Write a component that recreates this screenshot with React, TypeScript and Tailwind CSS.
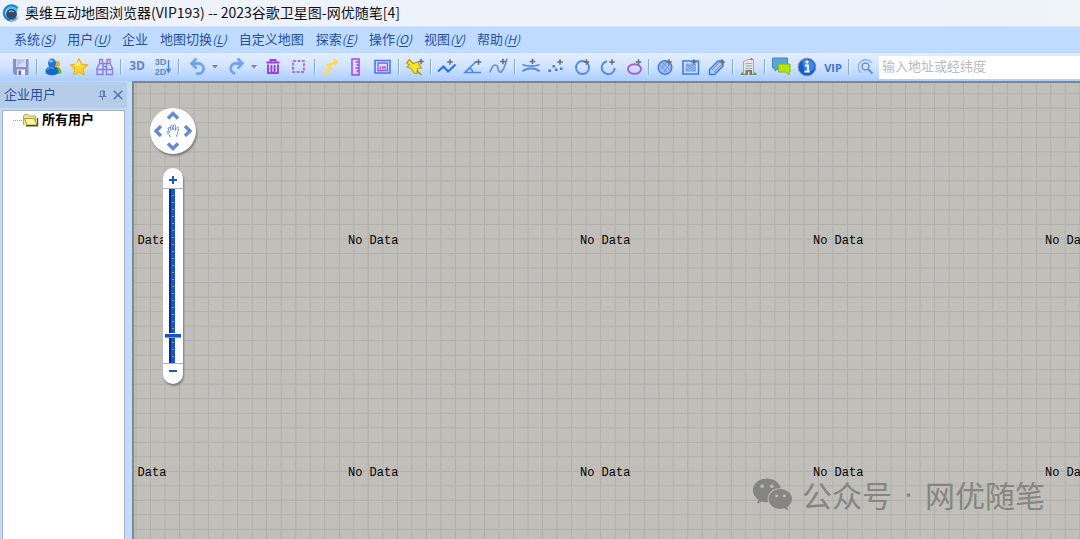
import type { ReactNode } from 'react';
import { FaWeixin } from 'react-icons/fa';

const menus = [
  { text: '系统', key: 'S' },
  { text: '用户', key: 'U' },
  { text: '企业' },
  { text: '地图切换', key: 'L' },
  { text: '自定义地图' },
  { text: '探索', key: 'E' },
  { text: '操作', key: 'O' },
  { text: '视图', key: 'V' },
  { text: '帮助', key: 'H' },
];

const CELL = 14.52;
const columns = Array.from({ length: 180 }, (_, i) => 2 + i * CELL);
const rows = Array.from({ length: 100 }, (_, i) => 10.8 + i * CELL);
const labelX = [-18, 214, 446, 679, 911];
const labelY = [149, 381];

function Icon({ children }: { children: ReactNode }) {
  return (
    <svg width="20" height="20" viewBox="0 0 20 20" fill="none" className="shrink-0">
      {children}
    </svg>
  );
}

function Tool({ label, children }: { label: string; children: ReactNode }) {
  return (
    <button type="button" aria-label={label} className="flex h-full w-[26px] shrink-0 items-center justify-center">
      {children}
    </button>
  );
}

function SplitTool({ label, children }: { label: string; children: ReactNode }) {
  return (
    <button type="button" aria-label={label} className="flex h-full w-[39px] shrink-0 items-center gap-1 pl-[6px]">
      {children}
      <svg width="6" height="4" viewBox="0 0 6 4">
        <path d="M0 0h6L3 3.500z" fill="#7d8594" />
      </svg>
    </button>
  );
}

function Divider() {
  return (
    <div className="flex w-[6px] shrink-0 justify-center">
      <div className="h-4 w-[2px] border-l border-r border-l-[#7fa9dc] border-r-white/70" />
    </div>
  );
}

const Plus = ({ x = 14, y = 4.5 }: { x?: number; y?: number }) => (
  <path d={`M${x - 2.8} ${y}h5.6M${x} ${y - 2.8}v5.6`} stroke="#686c74" strokeWidth="1.5" />
);

function Toolbar() {
  return (
    <div className="flex h-7 shrink-0 items-center bg-linear-to-b from-[#e3eeff] via-[#d0e3ff] to-[#aacdff] pl-2">
      <Tool label="保存">
        <Icon>
          <path d="M2 2h15.500v16H4l-2-2z" fill="#8591cb" />
          <path d="M5 2h10v8H5z" fill="#d5dcf3" />
          <path d="M5.500 2.500h9L6 10z" fill="#b8c4e8" />
          <path d="M6 12.500h8V18H6z" fill="#eef1fa" />
          <path d="M7.500 13.500H10V18H7.500z" fill="#5b68a5" />
        </Icon>
      </Tool>
      <Divider />
      <Tool label="用户">
        <Icon>
          <circle cx="14" cy="7" r="3" fill="#e5ad33" />
          <path d="M9 17c0-9 9-9 9.500-2 0 2-3 2.500-9.500 2z" fill="#73b829" />
          <ellipse cx="9" cy="6.200" rx="4" ry="4.600" fill="#1878d8" />
          <path d="M2.500 14.500c0-7 13-7 13 0 0 5-13 5-13 0z" fill="#1468cb" />
          <path d="M5.500 5c1-3 4-3 5-1-1 2-3 2-5 1z" fill="#6cb8f5" />
          <path d="M4.500 13c1-3 5-3 6-1" stroke="#4da0ec" strokeWidth="1.500" />
        </Icon>
      </Tool>
      <Tool label="收藏">
        <Icon>
          <path d="M10 1.500l2.500 5.600 6.200.7-4.600 4.100 1.300 6.100-5.400-3.100-5.400 3.100 1.300-6.100L1.300 7.800l6.200-.7z" fill="#ffd629" stroke="#e6b42d" strokeWidth="1.200" strokeLinejoin="round" />
          <path d="M10 4l1.500 4.500H5z" fill="#ffef82" />
        </Icon>
      </Tool>
      <Tool label="查找">
        <Icon>
          <path d="M4.500 2.500h3v4h4.500v-4h3v4l2.500 5v6h-6v-5h-3.500v5h-6v-6l2.500-5zM2 12.500h6M11.500 12.500h6M8 6.500v6M11.500 6.500v6M4.500 6.500H8M12 6.500h3M8 9.500h3.500" stroke="#8f7ade" strokeWidth="1.400" />
        </Icon>
      </Tool>
      <Divider />
      <Tool label="三维">
        <span className="pb-[2px] font-['Open_Sans',sans-serif] text-[12px] font-bold leading-none text-[#5c87cc]">3D</span>
      </Tool>
      <Tool label="三维二维切换">
        <span className="flex flex-col font-['Liberation_Sans',sans-serif] text-[9px] font-bold leading-[10px] text-[#5c87cc]">
          <span>3D</span>
          <span>2D</span>
        </span>
        <svg width="5" height="16" viewBox="0 0 5 16" fill="none">
          <path d="M2.500 1v12M.5 9.500l2 3.500 2-3.500" stroke="#4a80dc" strokeWidth="1.400" />
        </svg>
      </Tool>
      <Divider />
      <SplitTool label="撤销">
        <Icon>
          <path d="M5 6.500H10.500a5 5 0 0 1 0 10.200H8" stroke="#75a2ed" strokeWidth="2.800" />
          <path d="M8.500 1.500L3.500 6.500l5 5" stroke="#75a2ed" strokeWidth="2.600" />
        </Icon>
      </SplitTool>
      <SplitTool label="重做">
        <Icon>
          <path d="M15 6.500H9.500a5 5 0 0 0-1.500 10" stroke="#75a2ed" strokeWidth="2.800" />
          <path d="M10.500 1.500l5 5-5 5" stroke="#75a2ed" strokeWidth="2.600" />
        </Icon>
      </SplitTool>
      <Tool label="删除">
        <Icon>
          <path d="M3.500 5.500h13M7.500 5V3h5v2M5 7.500v8.500h10V7.500M8.400 8v7M11.600 8v7" stroke="#a13ddd" strokeWidth="1.900" />
        </Icon>
      </Tool>
      <Tool label="框选">
        <Icon>
          <path d="M4 4h11v11H4z" stroke="#a24ae4" strokeWidth="1.500" strokeDasharray="3 1.400" />
        </Icon>
      </Tool>
      <Divider />
      <Tool label="轨迹">
        <Icon>
          <path d="M2.500 18l2.500-4 5-2-3-4 8-3" stroke="#ffda52" strokeWidth="2.600" />
          <path d="M12 1l6 3-4 5z" fill="#ffda52" />
        </Icon>
      </Tool>
      <Tool label="测距">
        <Icon>
          <path d="M5 2h7v16H5zM12 5H8.500M12 8H9.500M12 11H8.500M12 14H9.500" stroke="#a743e4" strokeWidth="1.500" />
        </Icon>
      </Tool>
      <Tool label="面积">
        <Icon>
          <path d="M2 3.500h15v12.500H2z" stroke="#397ee9" strokeWidth="1.600" />
          <path d="M5 6h9.500v7.500H5zM7.500 12v-2.500M10 12V9M12 12V9" stroke="#a54be0" strokeWidth="1.300" />
        </Icon>
      </Tool>
      <Divider />
      <Tool label="标签">
        <Icon>
          <path d="M1.500 6l3-3.500 3.500 4 4.500-1.500 4 6-4 .5-.5 5-3-.5-3-4.500-4-1.500 2.500-2z" fill="#f9e52b" stroke="#b3a022" strokeWidth="1.200" />
          <path d="M12 14l4.500 4" stroke="#a58e17" strokeWidth="1.500" />
          <Plus x={16} />
        </Icon>
      </Tool>
      <Divider />
      <Tool label="折线">
        <Icon>
          <path d="M1 14.500l5.500-5 4.500 5 7.500-7" stroke="#2670ed" strokeWidth="2" />
          <Plus x={13} y={5} />
        </Icon>
      </Tool>
      <Tool label="角度">
        <Icon>
          <path d="M18 15.500H2L13.500 4M6 11.500c3 0 3.500 2 3.500 4" stroke="#4a87e4" strokeWidth="1.600" />
          <Plus x={15.5} y={5} />
        </Icon>
      </Tool>
      <Tool label="曲线">
        <Icon>
          <path d="M1 15.500c2-8 7-10 8-4s5 6 9-10" stroke="#6495cd" strokeWidth="1.700" />
          <Plus x={14} y={4.5} />
        </Icon>
      </Tool>
      <Divider />
      <div className="flex h-full w-[128px] shrink-0 justify-between">
        <Tool label="平行线">
          <Icon>
            <path d="M1.500 7.500c4 2.200 13 2.200 17 0M1.500 14.500c4-4 13-4 17 0" stroke="#548bdd" strokeWidth="1.900" />
            <Plus x={11.5} y={4.5} />
          </Icon>
        </Tool>
        <Tool label="多点">
          <Icon>
            <path d="M1.500 12.500H4V15H1.500zM5.500 8H8v2.500H5.500zM8 11.500h2.500V14H8zM13 10.500h2.500V13H13z" fill="#3b7de6" />
            <Plus x={13} y={5} />
          </Icon>
        </Tool>
        <Tool label="圆">
          <Icon>
            <circle cx="9.500" cy="10.500" r="6.500" stroke="#5089df" strokeWidth="1.900" />
            <Plus x={13.5} y={5} />
          </Icon>
        </Tool>
        <Tool label="圆弧">
          <Icon>
            <path d="M8 4.300A6.500 6.500 0 1 0 15.700 11" stroke="#5089df" strokeWidth="1.900" />
            <Plus x={13} y={5} />
          </Icon>
        </Tool>
        <Tool label="椭圆">
          <Icon>
            <ellipse cx="9.500" cy="12" rx="6.500" ry="4.800" stroke="#a65cdb" strokeWidth="1.900" />
            <Plus x={13.5} y={5} />
          </Icon>
        </Tool>
      </div>
      <Divider />
      <Tool label="圆形区域">
        <Icon>
          <circle cx="10" cy="10.500" r="6.800" fill="#9bbdf0" stroke="#407bdb" strokeWidth="1.500" />
          <path d="M5 8l7 7M8 6l7 7M6 12l5-7M9 15l5-7" stroke="#5f91df" strokeWidth=".8" />
          <Plus x={14} y={5} />
        </Icon>
      </Tool>
      <Tool label="矩形区域">
        <Icon>
          <path d="M2 4h15.500v13H2z" stroke="#397ce3" strokeWidth="1.600" />
          <path d="M4.500 6.500H15v8H4.500z" fill="#79a6e9" />
          <path d="M5 9l5 5M8 7l6 6M12 7l3 3" stroke="#b6d1f7" strokeWidth=".8" />
          <Plus x={13} y={5} />
        </Icon>
      </Tool>
      <Tool label="多边形区域">
        <Icon>
          <path d="M2.500 12.500L11 4h5v5l-8.500 8.500h-5z" fill="#b1ccf5" stroke="#397ce3" strokeWidth="1.500" />
          <path d="M5 13l7-7M7 15l7-7" stroke="#5d91e2" />
          <Plus x={15} y={5} />
        </Icon>
      </Tool>
      <Divider />
      <Tool label="建筑">
        <Icon>
          <path d="M1.500 18c1-4 4-3 4-3h8s4 0 4.500 3z" fill="#58a247" />
          <path d="M4.500 4.500l4-2h6V17h-10z" fill="#e4e4e4" stroke="#a9a9a9" />
          <path d="M6.500 6.500h6.500M6.500 9h6.500M6.500 11.500h6.500" stroke="#a3a8ad" />
          <path d="M6.500 13H13v5H6.500z" fill="#777" />
          <path d="M9 14.500h1.500V18H9z" fill="#ddd" />
          <path d="M12.500 3V1" stroke="#df5757" strokeWidth="1.800" />
        </Icon>
      </Tool>
      <Divider />
      <Tool label="消息">
        <Icon>
          <path d="M1.500 1h15v10H8l-4 3v-3H1.500z" fill="#59a7d9" stroke="#4385bd" />
          <path d="M7.500 7H19v8h-1v3l-3-3H7.500z" fill="#b4e512" stroke="#84b514" />
        </Icon>
      </Tool>
      <Tool label="关于">
        <Icon>
          <circle cx="10" cy="10" r="8.800" fill="#1959c9" stroke="#778eb7" />
          <path d="M5 3.500a8 8 0 0 1 12 9L8 16z" fill="#3d86e4" />
          <path d="M8 8.500h3v6M7.500 14.700h5.500" stroke="#fff" strokeWidth="1.800" />
          <circle cx="10" cy="5" r="1.600" fill="#fff" />
        </Icon>
      </Tool>
      <Tool label="会员">
        <span className="font-['Open_Sans',sans-serif] text-[11px] font-bold leading-none text-[#4271d0]">VIP</span>
      </Tool>
      <Divider />
      <Tool label="搜索">
        <Icon>
          <circle cx="10.500" cy="9.500" r="3.500" stroke="#6892d8" strokeWidth="1.600" />
          <path d="M13 12l4.500 4.500" stroke="#6892d8" strokeWidth="2.200" />
          <path d="M6 16A7.500 7.500 0 1 1 17 6" stroke="#8eaae0" strokeWidth="1.300" />
        </Icon>
      </Tool>
      <input
        type="text"
        aria-label="搜索地址"
        placeholder="输入地址或经纬度"
        className="ml-px h-[23px] min-w-0 flex-1 bg-white px-[3px] pb-[3px] text-[13px] text-black outline-none placeholder:text-[#bababa]"
      />
    </div>
  );
}

function Sidebar() {
  return (
    <aside className="flex w-[127px] shrink-0 flex-col pt-px">
      <div className="flex h-[26px] shrink-0 items-center bg-[#b5cde9] pl-1 pr-[2px] text-[13px] text-[#26509c]">
        <h2 className="flex-1 pb-[3px]">企业用户</h2>
        <button type="button" aria-label="固定" className="flex w-[18px] justify-center">
          <svg width="9" height="10" viewBox="0 0 9 10" fill="none" stroke="#5a7bb0">
            <path d="M2.500 1v5M2.500 1h4M5.500 1v5M6.500 1v5M.5 6.500h8M4.500 6.500V10" />
          </svg>
        </button>
        <button type="button" aria-label="关闭" className="flex w-[14px] justify-center">
          <svg width="10" height="10" viewBox="0 0 10 10">
            <path d="M.7.700l8.600 8.600M9.300.700L.7 9.300" stroke="#5576ad" strokeWidth="1.600" />
          </svg>
        </button>
      </div>
      <div className="ml-[2px] mr-[2px] mt-[2px] flex-1 border border-b-0 border-[#a8b0ba] bg-white">
        <button type="button" className="flex h-[18px] items-center pl-[10px] text-[13px] font-bold text-black">
          <span className="w-[9px] border-t border-dotted border-[#a0a0a0]" />
          <svg width="17" height="14" viewBox="0 0 17 14" fill="none" className="mr-[3px]">
            <path d="M1.500 12V3l1-1.500H6L7.500 3h6v8" fill="#ece38b" stroke="#b5ae4a" />
            <path d="M2.500 5.500H12l3 6.500H5z" fill="#fbf7a4" stroke="#a8a03e" />
            <path d="M4 12.700h11.500V5" stroke="#555225" strokeWidth="1.400" />
          </svg>
          <span className="pb-[2px]">所有用户</span>
        </button>
      </div>
    </aside>
  );
}

function Chevron({ label, d, place }: { label: string; d: string; place: string }) {
  return (
    <button type="button" aria-label={label} className={place}>
      <svg width="12" height="12" viewBox="0 0 12 12" fill="none">
        <path d={d} stroke="#678bd0" strokeWidth="3.400" />
      </svg>
    </button>
  );
}

function MapControls() {
  return (
    <div className="absolute left-4 top-[25px] flex w-[46px] flex-col items-center gap-[14px]">
      <div className="grid size-[46px] grid-cols-3 grid-rows-3 place-items-center rounded-full bg-white shadow-[1px_2px_2px_#666666bb]">
        <Chevron label="向上" d="M1 8.500l5-5 5 5" place="col-start-2 row-start-1" />
        <Chevron label="向左" d="M9 1L4 6l5 5" place="col-start-1 row-start-2" />
        <svg width="14" height="14" viewBox="0 0 14 14" className="col-start-2 row-start-2" fill="#fff" stroke="#4672bd" strokeLinejoin="round">
          <path d="M4.500 13C3.500 11 2 10 1 8c.5-1 1.500-1 2.500.5L2 4c.5-1 1.500-1 2 0l1 2.500L4.500 2c.5-1 1.500-1 2 0L7 6l.5-4.500c.5-1 1.500-1 2 0L9.200 6.500 11 3.500c.8-.6 1.500 0 1.500.8C12 8 11.500 10.500 10 13" strokeDasharray="2.500 .5" strokeWidth=".9" />
        </svg>
        <Chevron label="向右" d="M3 1l5 5-5 5" place="col-start-3 row-start-2" />
        <Chevron label="向下" d="M1 3.500l5 5 5-5" place="col-start-2 row-start-3" />
      </div>
      <div className="flex h-[216px] w-5 flex-col items-center rounded-full bg-white shadow-[1px_2px_2px_#666666bb]">
        <button type="button" aria-label="放大" className="flex h-[21px] w-full items-center justify-center border-b border-[#9fb4db] pt-[3px]">
          <svg width="8" height="8" viewBox="0 0 8 8">
            <path d="M0 4h8M4 0v8" stroke="#1b58cb" strokeWidth="2" />
          </svg>
        </button>
        <input
          type="range"
          aria-label="缩放级别"
          min="0"
          max="100"
          defaultValue="15"
          className="m-0 h-[174px] w-4 appearance-none bg-[repeating-linear-gradient(transparent_0_6px,#8c9cae_6px_7px),linear-gradient(#1552cc,#1552cc),linear-gradient(#0c2d80,#0c2d80)] bg-[length:2px_100%,4px_100%,6px_100%] bg-[position:7px_0,6px_0,4px_0] bg-no-repeat [direction:rtl] [writing-mode:vertical-lr] [&::-webkit-slider-thumb]:h-1 [&::-webkit-slider-thumb]:w-4 [&::-webkit-slider-thumb]:appearance-none [&::-webkit-slider-thumb]:border-b [&::-webkit-slider-thumb]:border-[#8c99af] [&::-webkit-slider-thumb]:bg-[#1953bf] [&::-webkit-slider-thumb]:shadow-[0_-1px_0_#fff]"
        />
        <button type="button" aria-label="缩小" className="flex w-full flex-1 items-start justify-center border-t border-[#9fb4db] pt-[6px]">
          <svg width="8" height="2" viewBox="0 0 8 2">
            <path d="M0 1h8" stroke="#1b58cb" strokeWidth="2" />
          </svg>
        </button>
      </div>
    </div>
  );
}

function MapCanvas() {
  return (
    <main className="relative min-w-0 flex-1 overflow-hidden border-l-2 border-t-2 border-[#858585] bg-[#c1bfba]">
      <svg className="absolute inset-0 size-full" stroke="#b0afaa" strokeWidth="1">
        {columns.map((x) => (
          <line key={`c${x}`} x1={x} x2={x} y1="0" y2="100%" />
        ))}
        {rows.map((y) => (
          <line key={`r${y}`} x1="0" x2="100%" y1={y} y2={y} />
        ))}
      </svg>
      {labelY.map((top) =>
        labelX.map((left) => (
          <span
            key={`${left}-${top}`}
            className="absolute whitespace-nowrap font-['Liberation_Mono',monospace] text-[12px] leading-[18px] text-black"
            style={{ left, top }}
          >
            No Data
          </span>
        )),
      )}
      <MapControls />
      <div className="absolute bottom-[24px] right-[35px] flex items-center gap-[9px] text-[#858581]">
        <FaWeixin size={41} />
        <span className="flex whitespace-nowrap text-[30px] leading-[42px]">
          公众号<span className="w-[33px] text-center font-['Open_Sans',sans-serif]">·</span>网优随笔
        </span>
      </div>
    </main>
  );
}

export default function App() {
  return (
    <div className="flex h-screen flex-col overflow-hidden bg-[#bfdbff] font-['Noto_Sans_CJK_SC',sans-serif]">
      <header className="flex h-[26px] shrink-0 items-center gap-[5px] bg-linear-to-r from-[#eef2fb] from-80% to-[#eef4f8] pl-[2px]">
        <svg width="18" height="18" viewBox="0 0 18 18" fill="none">
          <circle cx="9.500" cy="10" r="5.500" fill="#314c70" />
          <path d="M15.500 4.500A7.500 7.500 0 1 0 15 14" stroke="#1687d0" strokeWidth="2.400" />
          <path d="M5 6c3-4 9-2 10 1" stroke="#4dc2ef" strokeWidth="2" />
          <path d="M7 8c2-1.500 4-1 5 0" stroke="#8ca9c7" strokeWidth="1.500" />
          <path d="M8 16.500c4 .5 7-1 8-4" stroke="#8dbbe2" strokeWidth="1.300" />
        </svg>
        <h1 className="whitespace-nowrap pb-[2px] text-[14px] leading-none text-[#111]">奥维互动地图浏览器(VIP193) -- 2023谷歌卫星图-网优随笔[4]</h1>
      </header>
      <nav className="flex h-[27px] shrink-0 items-center gap-3 border-t border-[#d4e6ff] pb-[2px] pl-[14px] text-[13px] text-[#26509c]">
        {menus.map((m) => (
          <button key={m.text} type="button" className="whitespace-nowrap">
            {m.text}
            {m.key && (
              <span className="text-[12px] italic">
                (<u className="underline-offset-2">{m.key}</u>)
              </span>
            )}
          </button>
        ))}
      </nav>
      <Toolbar />
      <div className="flex min-h-0 flex-1 gap-[5px]">
        <Sidebar />
        <MapCanvas />
      </div>
    </div>
  );
}
